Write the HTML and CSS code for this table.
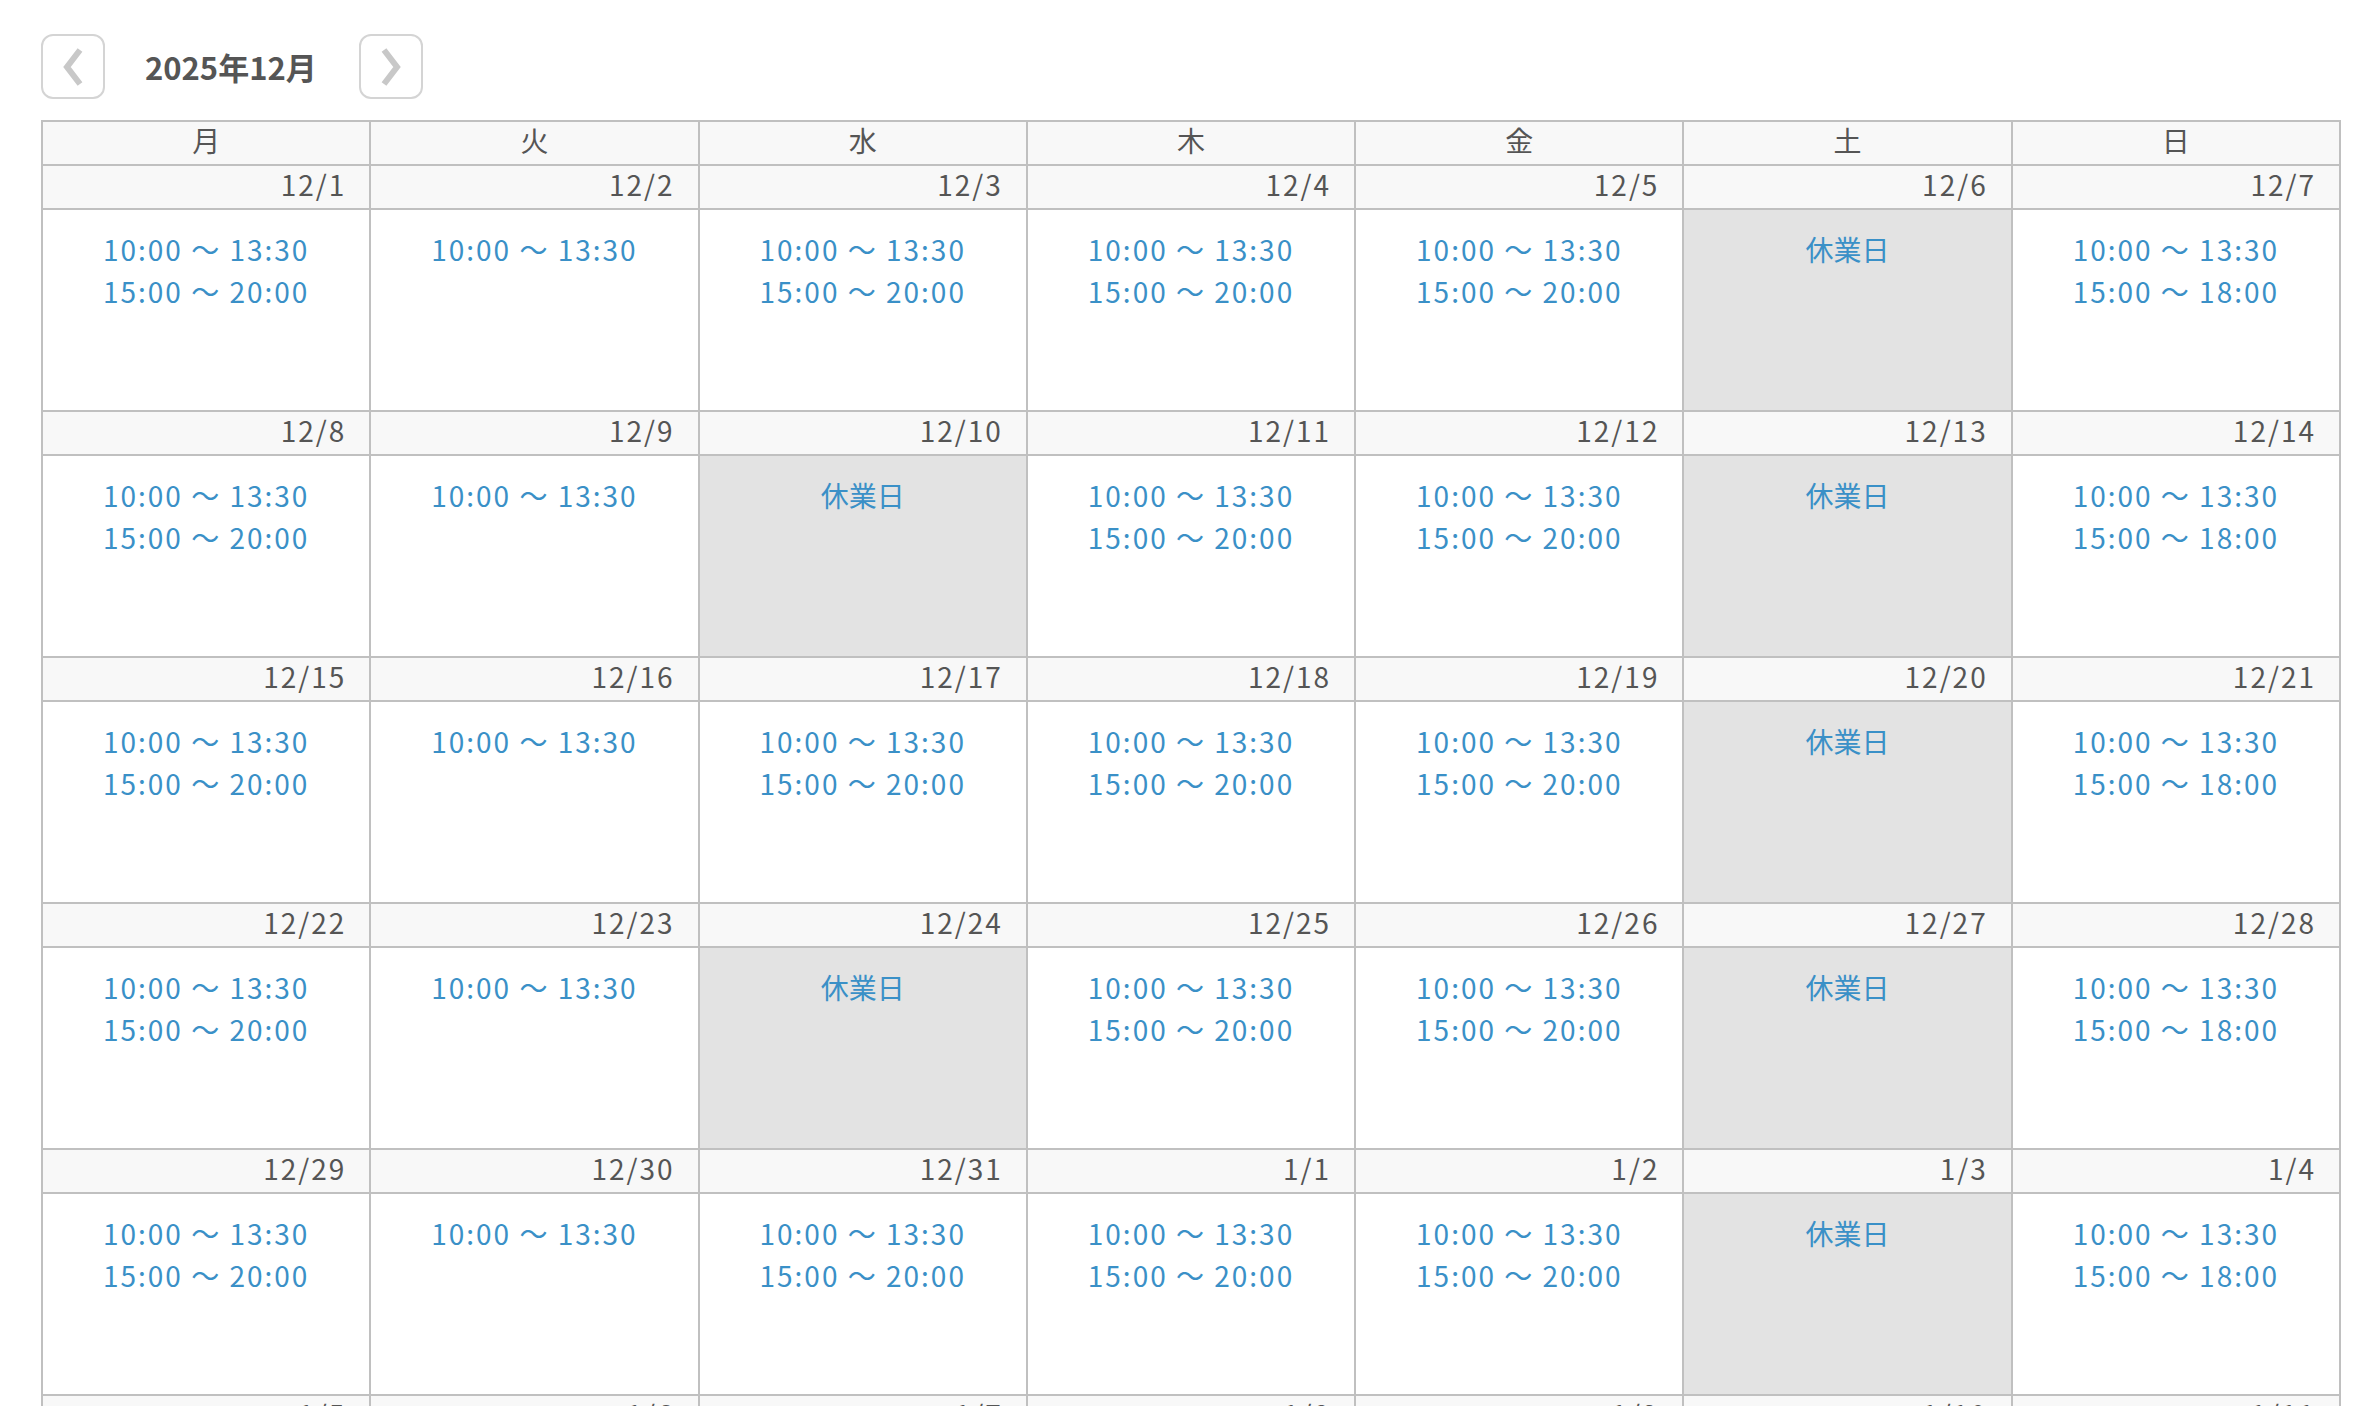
FILE: index.html
```html
<!DOCTYPE html>
<html lang="ja">
<head>
<meta charset="utf-8">
<title>2025年12月</title>
<link rel="stylesheet" href="styles.css">
</head>
<body>
<div class="page">
  <div class="nav">
    <button class="nav-btn" aria-label="前月">
      <svg width="22" height="40" viewBox="0 0 22 40"><polyline points="18,3 5,20 18,37" fill="none" stroke="#c8c8c8" stroke-width="6"/></svg>
    </button>
    <div class="title">2025年12月</div>
    <button class="nav-btn" aria-label="翌月">
      <svg width="22" height="40" viewBox="0 0 22 40"><polyline points="4,3 17,20 4,37" fill="none" stroke="#c8c8c8" stroke-width="6"/></svg>
    </button>
  </div>

  <div class="calendar">
    <div class="dow">月</div><div class="dow">火</div><div class="dow">水</div><div class="dow">木</div><div class="dow">金</div><div class="dow">土</div><div class="dow">日</div>

    <div class="date">12/1</div><div class="date">12/2</div><div class="date">12/3</div><div class="date">12/4</div><div class="date">12/5</div><div class="date">12/6</div><div class="date">12/7</div>
    <div class="slot"><p>10:00 ～ 13:30</p><p>15:00 ～ 20:00</p></div>
    <div class="slot"><p>10:00 ～ 13:30</p></div>
    <div class="slot"><p>10:00 ～ 13:30</p><p>15:00 ～ 20:00</p></div>
    <div class="slot"><p>10:00 ～ 13:30</p><p>15:00 ～ 20:00</p></div>
    <div class="slot"><p>10:00 ～ 13:30</p><p>15:00 ～ 20:00</p></div>
    <div class="slot closed"><p>休業日</p></div>
    <div class="slot"><p>10:00 ～ 13:30</p><p>15:00 ～ 18:00</p></div>

    <div class="date">12/8</div><div class="date">12/9</div><div class="date">12/10</div><div class="date">12/11</div><div class="date">12/12</div><div class="date">12/13</div><div class="date">12/14</div>
    <div class="slot"><p>10:00 ～ 13:30</p><p>15:00 ～ 20:00</p></div>
    <div class="slot"><p>10:00 ～ 13:30</p></div>
    <div class="slot closed"><p>休業日</p></div>
    <div class="slot"><p>10:00 ～ 13:30</p><p>15:00 ～ 20:00</p></div>
    <div class="slot"><p>10:00 ～ 13:30</p><p>15:00 ～ 20:00</p></div>
    <div class="slot closed"><p>休業日</p></div>
    <div class="slot"><p>10:00 ～ 13:30</p><p>15:00 ～ 18:00</p></div>

    <div class="date">12/15</div><div class="date">12/16</div><div class="date">12/17</div><div class="date">12/18</div><div class="date">12/19</div><div class="date">12/20</div><div class="date">12/21</div>
    <div class="slot"><p>10:00 ～ 13:30</p><p>15:00 ～ 20:00</p></div>
    <div class="slot"><p>10:00 ～ 13:30</p></div>
    <div class="slot"><p>10:00 ～ 13:30</p><p>15:00 ～ 20:00</p></div>
    <div class="slot"><p>10:00 ～ 13:30</p><p>15:00 ～ 20:00</p></div>
    <div class="slot"><p>10:00 ～ 13:30</p><p>15:00 ～ 20:00</p></div>
    <div class="slot closed"><p>休業日</p></div>
    <div class="slot"><p>10:00 ～ 13:30</p><p>15:00 ～ 18:00</p></div>

    <div class="date">12/22</div><div class="date">12/23</div><div class="date">12/24</div><div class="date">12/25</div><div class="date">12/26</div><div class="date">12/27</div><div class="date">12/28</div>
    <div class="slot"><p>10:00 ～ 13:30</p><p>15:00 ～ 20:00</p></div>
    <div class="slot"><p>10:00 ～ 13:30</p></div>
    <div class="slot closed"><p>休業日</p></div>
    <div class="slot"><p>10:00 ～ 13:30</p><p>15:00 ～ 20:00</p></div>
    <div class="slot"><p>10:00 ～ 13:30</p><p>15:00 ～ 20:00</p></div>
    <div class="slot closed"><p>休業日</p></div>
    <div class="slot"><p>10:00 ～ 13:30</p><p>15:00 ～ 18:00</p></div>

    <div class="date">12/29</div><div class="date">12/30</div><div class="date">12/31</div><div class="date">1/1</div><div class="date">1/2</div><div class="date">1/3</div><div class="date">1/4</div>
    <div class="slot"><p>10:00 ～ 13:30</p><p>15:00 ～ 20:00</p></div>
    <div class="slot"><p>10:00 ～ 13:30</p></div>
    <div class="slot"><p>10:00 ～ 13:30</p><p>15:00 ～ 20:00</p></div>
    <div class="slot"><p>10:00 ～ 13:30</p><p>15:00 ～ 20:00</p></div>
    <div class="slot"><p>10:00 ～ 13:30</p><p>15:00 ～ 20:00</p></div>
    <div class="slot closed"><p>休業日</p></div>
    <div class="slot"><p>10:00 ～ 13:30</p><p>15:00 ～ 18:00</p></div>

    <div class="date">1/5</div><div class="date">1/6</div><div class="date">1/7</div><div class="date">1/8</div><div class="date">1/9</div><div class="date">1/10</div><div class="date">1/11</div>
  </div>
</div>
</body>
</html>
```

FILE: styles.css
```css
html, body {
  margin: 0;
  padding: 0;
  background: #ffffff;
}

body {
  font-family: "Noto Sans CJK JP", "Noto Sans", sans-serif;
  color: #555555;
}

.page {
  padding: 34px 18px 0 41px;
  height: 1372px;
  overflow: hidden;
}

.nav {
  display: flex;
  align-items: center;
  height: 65px;
}

.nav-btn {
  box-sizing: border-box;
  width: 64px;
  height: 65px;
  padding: 0;
  margin: 0;
  border: 2px solid #d4d4d4;
  border-radius: 12px;
  background: #ffffff;
  display: flex;
  align-items: center;
  justify-content: center;
}

.title {
  margin: 0 42px 0 40px;
  font-size: 31px;
  font-weight: 700;
  color: #555555;
  line-height: 1;
}

.calendar {
  box-sizing: border-box;
  margin-top: 21px;
  width: 2300px;
  display: grid;
  grid-template-columns: repeat(7, 1fr);
  border-left: 2px solid #c0c0c0;
  border-top: 2px solid #c0c0c0;
}

.dow,
.date,
.slot {
  box-sizing: border-box;
  border-right: 2px solid #c0c0c0;
  border-bottom: 2px solid #c0c0c0;
  font-size: 28px;
  line-height: 42px;
}

.dow {
  height: 44px;
  line-height: 36px;
  padding-bottom: 6px;
  background: #f8f8f8;
  text-align: center;
  color: #555555;
}

.date {
  height: 44px;
  line-height: 36px;
  padding-bottom: 6px;
  background: #f8f8f8;
  text-align: right;
  padding-right: 23px;
  letter-spacing: 2px;
  color: #555555;
}

.slot {
  height: 202px;
  padding-top: 18px;
  text-align: center;
  color: #3a90c7;
  background: #ffffff;
  letter-spacing: 2px;
}

.slot p {
  margin: 0;
}

.slot.closed {
  background: #e3e3e3;
  letter-spacing: 0;
}
```
